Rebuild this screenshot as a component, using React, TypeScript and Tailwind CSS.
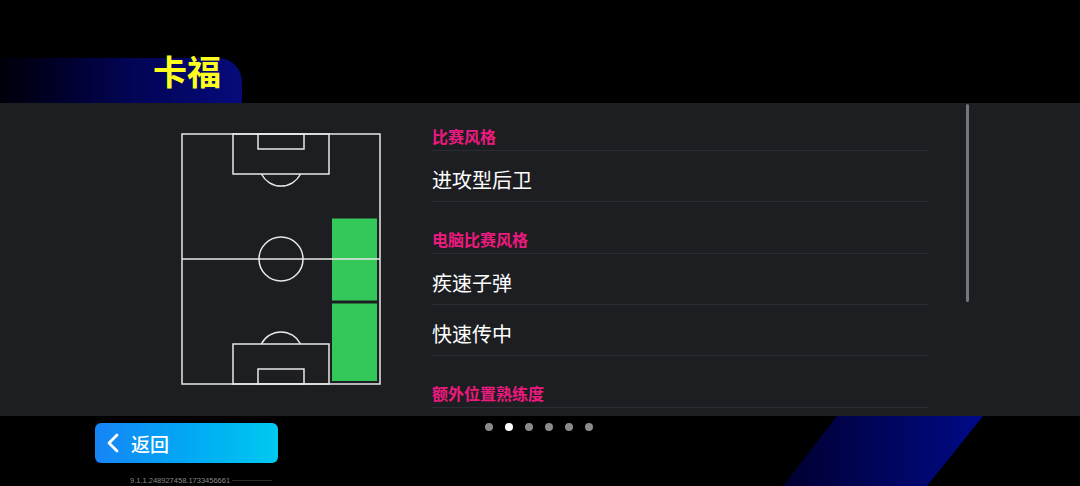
const Pitch: React.FC = () => {
    return (
        <svg width={202} height={254} viewBox="0 0 202 254" fill="none">
            {/* positions */}
            <rect x={151} y={85.5} width={45} height={82} fill="#34c85a" />
            <rect x={151} y={170.5} width={45} height={77.5} fill="#34c85a" />
            <g stroke="#e8e8e8" strokeWidth={1.5}>
                <rect x={1} y={1} width={198} height={250} />
                <line x1={1} y1={126} x2={199} y2={126} />
                <circle cx={100} cy={126} r={22} />
                {/* top half */}
                <rect x={52} y={1} width={96} height={40} />
                <rect x={77} y={1} width={46} height={15} />
                <path d="M80.4 41 A22 22 0 0 0 119.6 41" />
                {/* bottom half */}
                <rect x={52} y={211} width={96} height={40} />
                <rect x={77} y={236} width={46} height={15} />
                <path d="M80.4 211 A22 22 0 0 1 119.6 211" />
            </g>
        </svg>
    );
};

const Heading: React.FC<{ text: string; first?: boolean }> = ({ text, first }) => (
    <div className={`${first ? "h-[48px]" : "h-[52px]"} flex items-end pb-[6px] border-b border-[#2c2d32]`}>
        <p className="text-[16px] leading-none font-bold text-[#ec1a7e]">{text}</p>
    </div>
);

const Item: React.FC<{ text: string }> = ({ text }) => (
    <div className="h-[51px] flex items-center pt-[8px] border-b border-[#2c2d32]">
        <p className="text-[20px] leading-none text-white">{text}</p>
    </div>
);

const App: React.FC = () => {
    return (
        <div className="w-[1080px] h-[486px] bg-black flex flex-col overflow-hidden font-['Noto_Sans_CJK_SC','Noto_Sans',sans-serif]">
            {/* Player name tab */}
            <div className="h-[103px] flex items-end">
                <div className="h-[45px] w-[242px] rounded-tr-[24px] bg-gradient-to-r from-[#00000a] via-[#020450] to-[#060b7c] flex items-start pl-[153px]">
                    <h1 className="-mt-[4px] text-[34px] leading-none font-bold text-[#ffff1e]">卡福</h1>
                </div>
            </div>

            {/* Main panel */}
            <div className="h-[313px] bg-[#1d1e22] flex">
                <div className="pl-[181px] pt-[30px]">
                    <Pitch />
                </div>
                <div className="ml-[49px] w-[496px] overflow-hidden">
                    <Heading text="比赛风格" first />
                    <Item text="进攻型后卫" />
                    <Heading text="电脑比赛风格" />
                    <Item text="疾速子弹" />
                    <Item text="快速传中" />
                    <Heading text="额外位置熟练度" />
                </div>
                {/* scrollbar */}
                <div className="ml-[38px] mt-px w-[3px] h-[198px] bg-[#75777c] rounded-full" />
            </div>

            {/* Footer */}
            <div className="flex-1 relative flex">
                <svg className="absolute left-[783px] top-0" width={200} height={70} viewBox="0 0 200 70">
                    <defs>
                        <linearGradient id="stripe" x1="0" y1="0" x2="1" y2="0">
                            <stop offset="0" stopColor="#000030" />
                            <stop offset="1" stopColor="#000a88" />
                        </linearGradient>
                    </defs>
                    <polygon points="54,0 200,0 144,70 0,70" fill="url(#stripe)" />
                </svg>
                <div className="w-[278px] shrink-0 pl-[95px] pt-[7px] flex flex-col">
                    <button className="w-[183px] h-[40px] rounded-[6px] bg-gradient-to-r from-[#1684f6] to-[#02c9ef] flex items-center pl-[12px] gap-[12px]">
                        <svg width={12} height={20} viewBox="0 0 12 20" fill="none">
                            <polyline points="10,2 2,10 10,18" stroke="white" strokeWidth={2.8} strokeLinecap="round" strokeLinejoin="round" />
                        </svg>
                        <span className="text-[19px] leading-none font-medium text-white">返回</span>
                    </button>
                    <div className="mt-[13px] pl-[35px] flex items-center gap-[2px]">
                        <span className="text-[7.5px] leading-[9px] text-[#8a8a8a] font-['Liberation_Sans',sans-serif] whitespace-nowrap">9.1.1.248927458.1733456661</span>
                        <span className="w-[40px] h-px bg-[#2a2a2a]" />
                    </div>
                </div>
                {/* page dots */}
                <div className="ml-[207px] mt-[7px] flex gap-3 h-[8px]">
                    <span className="w-2 h-2 rounded-full bg-[#8a8a8a]" />
                    <span className="w-2 h-2 rounded-full bg-white" />
                    <span className="w-2 h-2 rounded-full bg-[#8a8a8a]" />
                    <span className="w-2 h-2 rounded-full bg-[#8a8a8a]" />
                    <span className="w-2 h-2 rounded-full bg-[#8a8a8a]" />
                    <span className="w-2 h-2 rounded-full bg-[#8a8a8a]" />
                </div>
            </div>
        </div>
    );
};

export default App;
